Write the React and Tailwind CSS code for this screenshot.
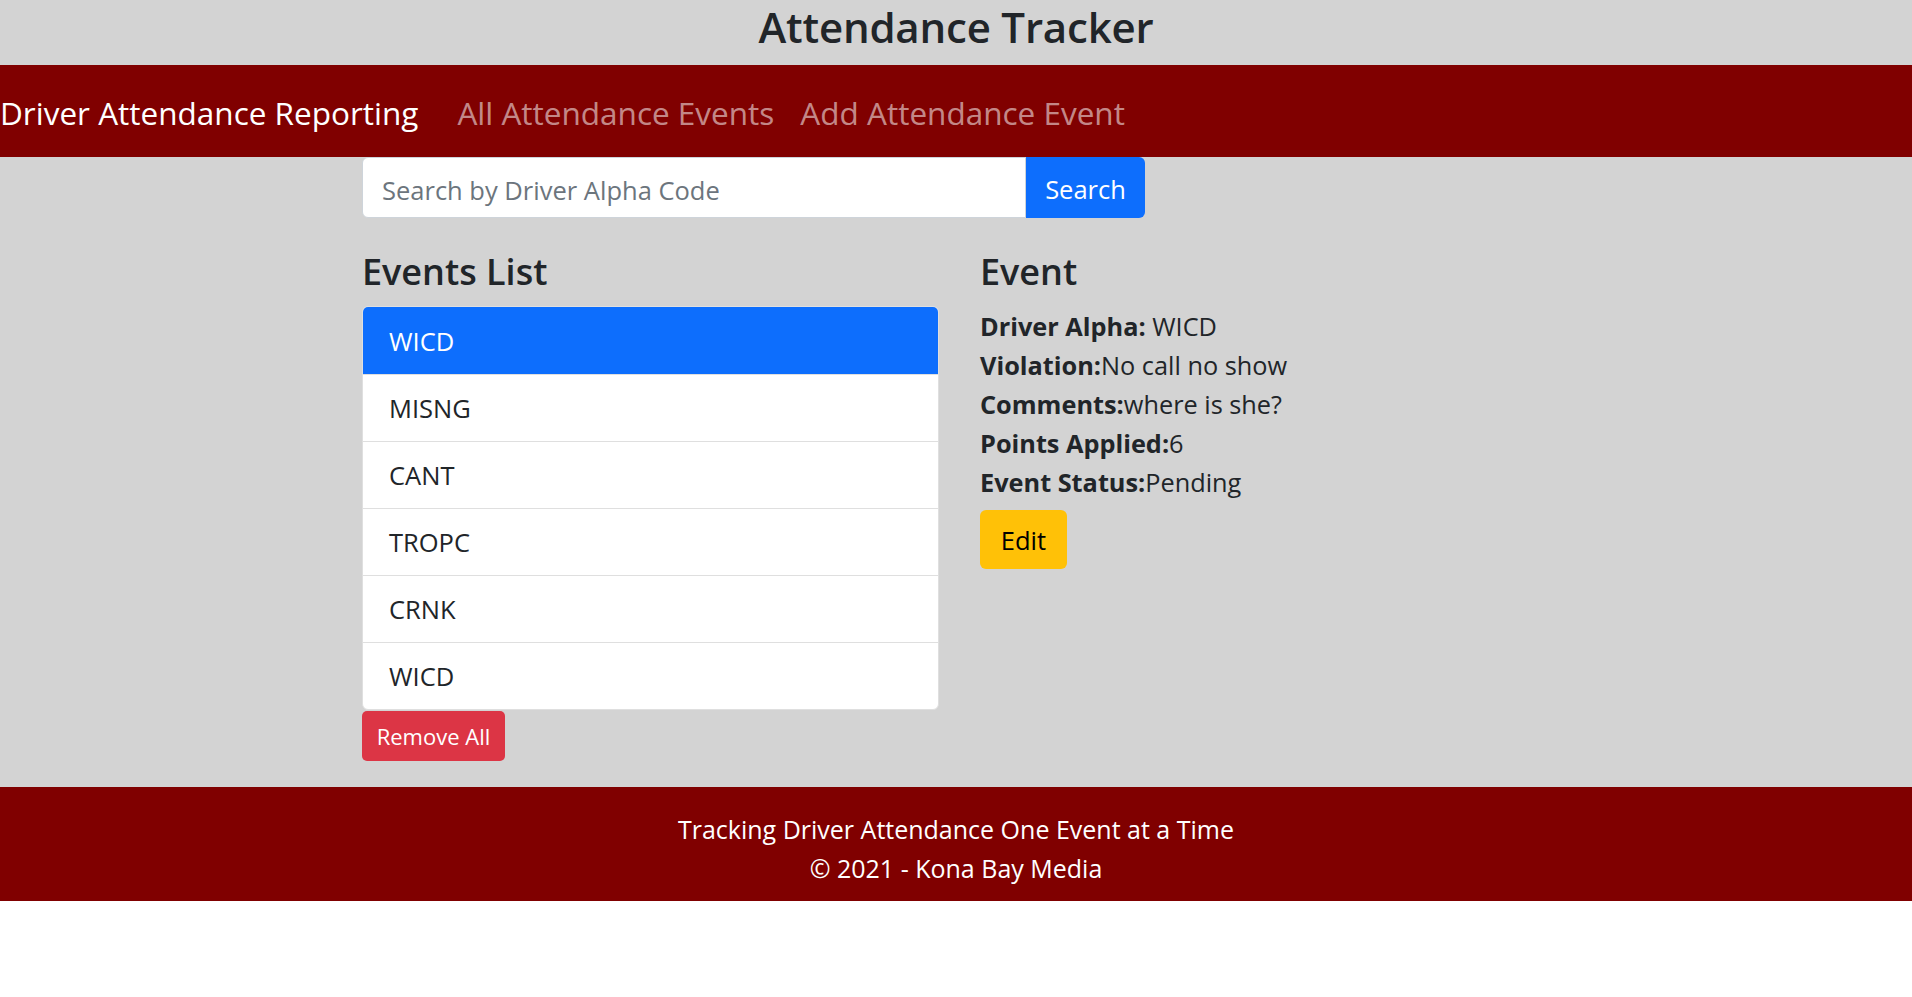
import React from "react";

const items = ["WICD", "MISNG", "CANT", "TROPC", "CRNK", "WICD"];

export default function App() {
  return (
    <div className="min-h-[997px] bg-white text-[#212529]" style={{ fontFamily: '"Open Sans", "Noto Sans", sans-serif' }}>
      <header className="h-[65px] bg-[#d3d3d3] flex justify-center">
        <h1 className="text-[42px] leading-[54px] font-semibold tracking-[-0.2px]">Attendance Tracker</h1>
      </header>
      <nav className="h-[92px] bg-[#800000] flex items-center pt-[4px]">
        <span className="text-[31.5px] text-white">Driver Attendance Reporting</span>
        <a className="ml-[39px] text-[31.5px] text-[rgba(255,255,255,0.55)]">All Attendance Events</a>
        <a className="ml-[26px] text-[31.5px] text-[rgba(255,255,255,0.55)]">Add Attendance Event</a>
      </nav>
      <main className="bg-[#d3d3d3] pb-[26px]">
        <div className="w-[1188px] mx-auto">
          <div className="flex w-[783px] h-[61px]">
            <input
              className="flex-1 bg-white rounded-l-[6px] border border-[#ced4da] px-[19px] pt-[5px] text-[25.5px] outline-none placeholder:text-[#6c757d]"
              placeholder="Search by Driver Alpha Code"
            />
            <button className="w-[119px] bg-[#0d6efd] text-white text-[25.5px] rounded-r-[6px] pt-[4px]">Search</button>
          </div>
          <div className="flex mt-[31px]">
            <div className="w-[577px]">
              <h4 className="text-[36px] leading-[46px] font-semibold mb-[11px]">Events List</h4>
              <ul className="rounded-[6px] overflow-hidden border border-[#dfdfdf] bg-white">
                {items.map((t, i) => (
                  <li
                    key={i}
                    className={
                      i === 0
                        ? "h-[67px] flex items-center px-[26px] pt-[1px] text-[25.5px] bg-[#0d6efd] text-white"
                        : "h-[67px] flex items-center px-[26px] pt-[1px] text-[25.5px] border-t border-[#dfdfdf]"
                    }
                  >
                    {t}
                  </li>
                ))}
              </ul>
              <button className="mt-[1px] h-[50px] w-[143px] bg-[#dc3545] text-white text-[22px] rounded-[5px] pt-[1px]">Remove All</button>
            </div>
            <div className="ml-[41px]">
              <h4 className="text-[36px] leading-[46px] font-semibold mb-[12px]">Event</h4>
              <div className="text-[25.3px] leading-[39px]">
                <div><span className="font-bold">Driver Alpha:</span> WICD</div>
                <div><span className="font-bold">Violation:</span>No call no show</div>
                <div><span className="font-bold">Comments:</span>where is she?</div>
                <div><span className="font-bold">Points Applied:</span>6</div>
                <div><span className="font-bold">Event Status:</span>Pending</div>
              </div>
              <button className="mt-[8px] h-[59px] w-[87px] bg-[#ffc107] text-black text-[25.5px] rounded-[6px] pt-[1px]">Edit</button>
            </div>
          </div>
        </div>
      </main>
      <footer className="h-[114px] bg-[#800000] text-white text-[25px] leading-[39px] flex flex-col items-center justify-center pt-[10px]">
        <div>Tracking Driver Attendance One Event at a Time</div>
        <div>© 2021 - Kona Bay Media</div>
      </footer>
    </div>
  );
}
